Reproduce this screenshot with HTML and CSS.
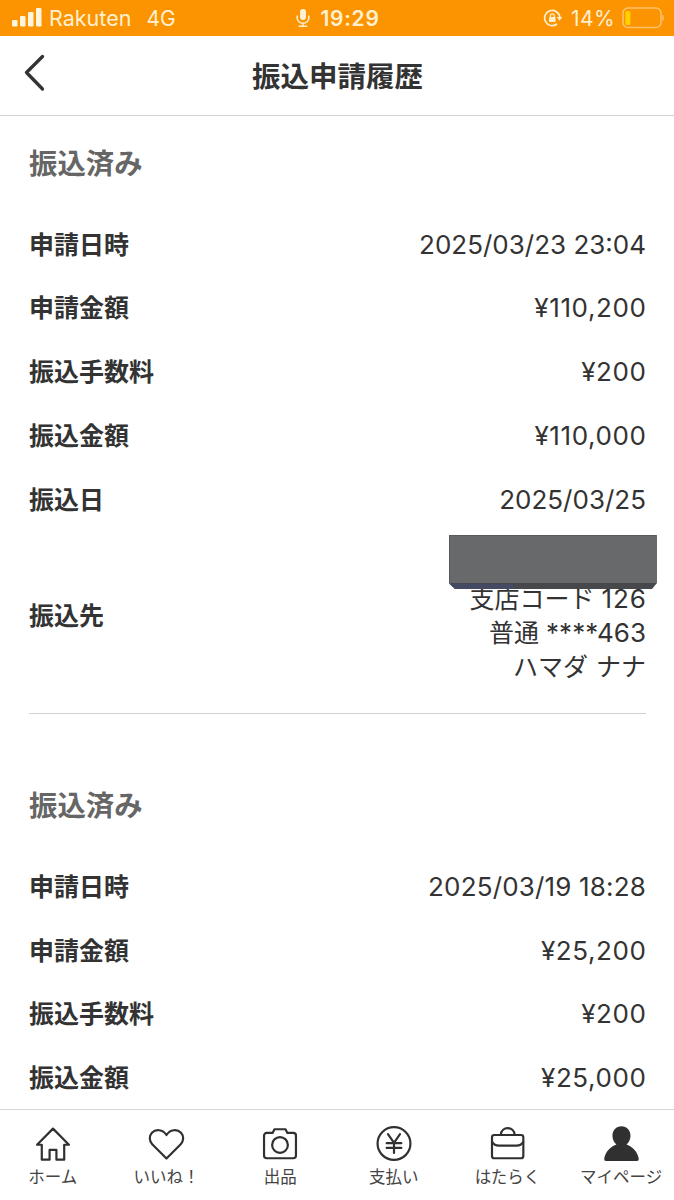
FILE: index.html
```html
<!DOCTYPE html>
<html lang="ja">
<head>
<meta charset="utf-8">
<title>振込申請履歴</title>
<link rel="stylesheet" href="styles.css">
</head>
<body>
<div class="app">
  <div class="status">
    <div class="status-left">
      <svg class="signal" width="30" height="20" viewBox="0 0 30 20" fill="#fff5df"><rect x="0" y="13" width="5.5" height="6.5" rx="1.2"/><rect x="8" y="9" width="5.5" height="10.5" rx="1.2"/><rect x="16" y="5" width="5.5" height="14.5" rx="1.2"/><rect x="24" y="1" width="5.5" height="18.5" rx="1.2"/></svg>
      <span class="carrier">Rakuten</span><span class="network">4G</span>
    </div>
    <div class="status-mid">
      <svg width="14" height="20" viewBox="0 0 14 20" fill="none" stroke="#fff0d2" stroke-width="1.5" stroke-linecap="round"><rect x="4" y="1" width="6" height="11" rx="3" fill="#fff0d2" stroke="none"/><path d="M1.2 8v2.2a5.8 5 0 0 0 11.6 0V8M7 15.3V18M3.2 18.2h7.6"/></svg>
      <span class="clock">19:29</span>
    </div>
    <div class="status-right">
      <svg width="20" height="18" viewBox="0 0 20 18" fill="none" stroke="#fff0d2" stroke-width="1.7"><path d="M14 15A7.6 7.6 0 1 1 16.800 8.200"/><path d="M13.800 8h5.600l-2.800 3.800z" fill="#fff0d2" stroke="none"/><rect x="6.100" y="8" width="6.400" height="5" rx=".6" fill="#fff0d2" stroke="none"/><path d="M7.400 8V6.700a1.900 1.900 0 0 1 3.800 0V8" stroke-width="1.2"/></svg>
      <span class="percent">14%</span>
      <svg width="44" height="22" viewBox="0 0 44 22"><rect x="3" y="1" width="38" height="19.5" rx="5" fill="none" stroke="#ffc06a" stroke-width="1.6"/><rect x="5.4" y="4" width="5" height="14" rx="1.5" fill="#ffd000"/><path d="M42.400 7.5c2 1 2 5.800 0 6.800z" fill="#ffc06a"/></svg>
    </div>
  </div>
  <header class="header">
    <svg class="back" width="24" height="40" viewBox="0 0 24 40" fill="none" stroke="#333" stroke-width="3.3" stroke-linecap="round" stroke-linejoin="round"><path d="M19.5 3.5 3.5 19.5l16 16.5"/></svg>
    <h1 class="title">振込申請履歴</h1>
  </header>
  <main class="content">
    <section class="record">
      <h2 class="state">振込済み</h2>
      <dl class="rows">
        <div class="row"><dt>申請日時</dt><dd class="date">2025/03/23 23:04</dd></div>
        <div class="row"><dt>申請金額</dt><dd class="amount">¥110,200</dd></div>
        <div class="row"><dt>振込手数料</dt><dd class="amount">¥200</dd></div>
        <div class="row"><dt>振込金額</dt><dd class="amount">¥110,000</dd></div>
        <div class="row"><dt>振込日</dt><dd class="date">2025/03/25</dd></div>
        <div class="row row-account"><dt>振込先</dt><dd class="account"><span class="bank"></span><span>支店コード <span class="code">126</span></span><span>普通 <span class="number">****463</span></span><span class="holder">ハマダ ナナ</span>
          <svg class="mask" width="210" height="56" viewBox="0 0 210 56"><path d="M1 1h207q1 0 1 1v47l-5 6H7l-6-6z" fill="#47484c"/><path d="M1 1h207q1 0 1 1v47H1z" fill="#68696b"/><path d="M1 49.5 7 55h58v-5z" fill="#444a62"/><path d="M1.500 49V1.500H208" fill="none" stroke="#58595d"/></svg>
        </dd></div>
      </dl>
    </section>
    <section class="record">
      <h2 class="state">振込済み</h2>
      <dl class="rows">
        <div class="row"><dt>申請日時</dt><dd class="date date-wide">2025/03/19 18:28</dd></div>
        <div class="row"><dt>申請金額</dt><dd class="amount">¥25,200</dd></div>
        <div class="row"><dt>振込手数料</dt><dd class="amount">¥200</dd></div>
        <div class="row"><dt>振込金額</dt><dd class="amount">¥25,000</dd></div>
      </dl>
    </section>
  </main>
  <nav class="tabs">
    <div class="tab"><svg class="icon" viewBox="0 0 40 40"><path d="M20 3.800 3.200 20.800h5v15.700h8.200V26.200h7.200v10.300h8.200V20.800h5z"/></svg><span>ホーム</span></div>
    <div class="tab"><svg class="icon" viewBox="0 0 40 40"><path d="M20.500 35.300 5.500 20.200C2.300 17 2 11.600 5.200 8.200 9.200 4 16.500 4.400 20.500 10.500 24.500 4.400 31.800 4 35.800 8.200c3.200 3.400 2.900 8.800-.3 12z"/></svg><span>いいね！</span></div>
    <div class="tab"><svg class="icon" viewBox="0 0 40 40"><path d="M6 8.300h6.200l2-3.800h11.600l2 3.800H34a2.800 2.800 0 0 1 2.800 2.800v21.100A2.800 2.800 0 0 1 34 35H6a2.800 2.800 0 0 1-2.800-2.800V11.100A2.800 2.800 0 0 1 6 8.300z"/><circle cx="20" cy="21" r="8.300"/></svg><span>出品</span></div>
    <div class="tab"><svg class="icon" viewBox="0 0 40 40"><circle cx="20" cy="19.500" r="17.300"/><path d="m13.700 9.700 6.300 9 6.300-9M20 18.700v10.800M12.300 19.100h15.400M12.300 24.100h15.400"/></svg><span>支払い</span></div>
    <div class="tab"><svg class="icon" viewBox="0 0 40 40"><rect x="4.200" y="10.500" width="33" height="24.500" rx="2.500"/><path d="M13.500 10.200c.5-9.300 14-9.300 14.500 0M4.500 18q2 3.800 7 3.800H30q5 0 7-3.800"/></svg><span>はたらく</span></div>
    <div class="tab"><svg class="icon icon-solid" viewBox="0 0 40 40"><path d="M20.500 1.200c5.500 0 9.500 4.300 9.500 10 0 3.500-1.500 7-4.200 9.200C32.500 23 37.500 28 38.700 35.500q.3 2.500-2 2.500H4.300q-2.300 0-2-2.500C3.500 28 8.500 23 15.200 20.400 12.500 18.200 11 14.700 11 11.200 11 5.500 15 1.200 20.500 1.200z"/></svg><span>マイページ</span></div>
  </nav>
</div>
</body>
</html>
```
FILE: styles.css
```css
* { box-sizing: border-box; }
body {
  margin: 0;
  background: #fff;
  color: #333;
  font-family: Inter, "Noto Sans CJK JP", sans-serif;
}
.app { display: flex; flex-direction: column; height: 1200px; overflow: hidden; }

.status {
  display: grid;
  grid-template-columns: 1fr auto 1fr;
  align-items: center;
  flex: none;
  height: 36px;
  padding: 0 10px 0 12px;
  background: #fb9400;
  color: #fff0d2;
  font-size: 22px;
}
.status-left, .status-mid, .status-right { display: flex; align-items: center; }
.signal { margin: -2px 7px 0 0; }
.carrier { font-size: 21.5px; }
.network { margin-left: 15px; font-size: 21px; }
.status-mid { gap: 10px; }
.clock { font-weight: 600; font-size: 21px; letter-spacing: .7px; }
.status-right { justify-content: flex-end; gap: 8px; }
.percent { font-size: 21px; letter-spacing: .4px; margin-right: -3px; }

.header {
  display: grid;
  grid-template-columns: 60px 1fr 60px;
  align-items: center;
  flex: none;
  height: 80px;
  border-bottom: 1px solid #d2d2d2;
}
.back { margin: -6px 0 0 23px; }
.title { margin: 2px 0 0 1px; text-align: center; font-size: 28.5px; line-height: 42px; font-weight: 700; }

.content { flex: 1; min-height: 0; overflow: hidden; padding: 0 28px 0 29px; }
.record { padding-top: 27px; }
.record + .record { margin-top: 14px; padding-top: 71px; border-top: 1px solid #d2d2d2; }
.state { margin: 0 0 28px; font-size: 28.4px; line-height: 42px; font-weight: 700; color: #666; }
.rows { margin: 0; }
.row { display: flex; align-items: center; justify-content: space-between; padding: 14.8px 0; line-height: 34.1px; white-space: nowrap; }
.row-account { padding-top: 16.5px; }
.row dt { font-size: 25px; font-weight: 700; }
.row dd { margin: 0; font-size: 25px; }
.row .date { font-size: 26px; }
.row .date-wide { letter-spacing: .17px; }
.row .amount { font-size: 26px; letter-spacing: .6px; margin-right: -.5px; }
.account { position: relative; display: flex; flex-direction: column; align-items: flex-end; }
.account > span { height: 34.1px; }
.code { font-size: 26px; letter-spacing: 1px; margin-right: -1px; }
.number { font-size: 26px; }
.holder { word-spacing: 1px; }
.mask { position: absolute; right: -12px; top: -14px; }

.tabs {
  display: grid;
  grid-template-columns: repeat(6, 1fr);
  flex: none;
  height: 91px;
  margin: 0 -4px;
  padding-top: 15px;
  border-top: 1px solid #d6d6d6;
}
.tab { display: flex; flex-direction: column; align-items: center; gap: 2px; font-size: 16.5px; line-height: 24px; color: #444; white-space: nowrap; }
.icon { width: 38px; height: 38px; fill: none; stroke: #303030; stroke-width: 2.3; stroke-linejoin: round; stroke-linecap: round; }
.icon-solid { fill: #303030; stroke: none; }
```
